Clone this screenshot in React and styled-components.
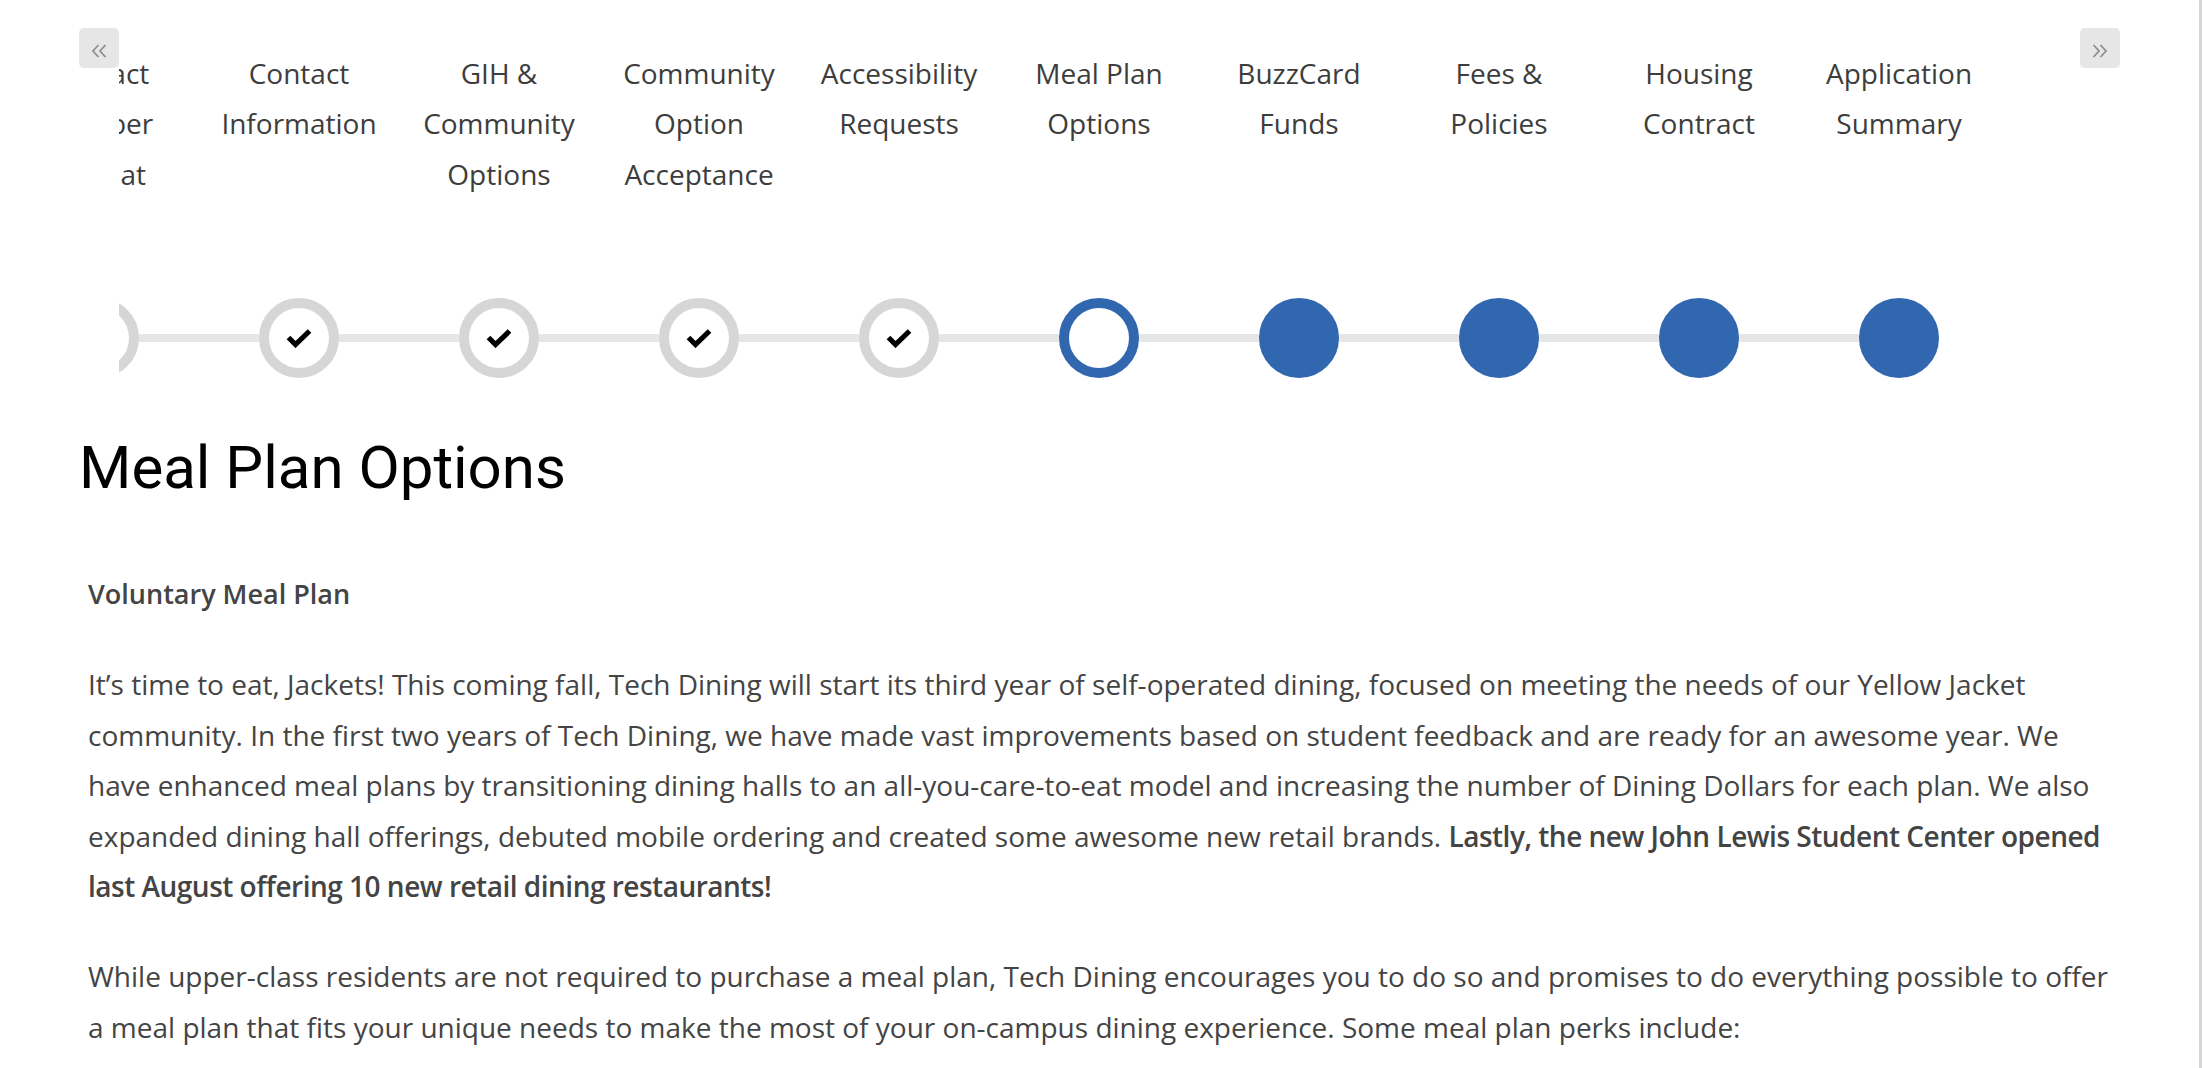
import React from "react";
import styled, { createGlobalStyle } from "styled-components";

const GlobalStyle = createGlobalStyle`
  html, body {
    margin: 0;
    padding: 0;
    background: #ffffff;
  }
  body {
    font-family: "Open Sans", "Liberation Sans", Arial, sans-serif;
    color: #444444;
  }
  * { box-sizing: border-box; }
`;

const Page = styled.div`
  min-height: 100vh;
  padding: 0 79px 40px 79px;
  border-right: 3px solid #d6d6d6;
`;

const StepperRow = styled.div`
  display: flex;
  align-items: flex-start;
  padding-top: 28px;
`;

const NavButton = styled.button`
  flex: 0 0 40px;
  width: 40px;
  height: 40px;
  border: none;
  border-radius: 5px;
  background: #e6e6e6;
  padding: 6px 0 0 0;
  margin: 0;
  display: flex;
  align-items: center;
  justify-content: center;
  cursor: pointer;
`;

const Viewport = styled.div`
  flex: 1 1 auto;
  min-width: 0;
  overflow: hidden;
`;

const Track = styled.div`
  display: flex;
  margin-left: ${(p) => -p.$offset}px;
`;

const Step = styled.div`
  flex: 0 0 200px;
  width: 200px;
  display: flex;
  flex-direction: column;
  align-items: center;
  padding-top: 20px;
`;

const StepLabel = styled.div`
  width: 170px;
  height: 250px;
  text-align: center;
  font-size: 28px;
  line-height: 50.4px;
  color: #3d3d3d;
`;

const CircleRow = styled.div`
  width: 100%;
  height: 80px;
  display: flex;
  align-items: center;
`;

const Connector = styled.div`
  flex: 1 1 0;
  height: 8px;
  background: ${(p) => (p.$hidden ? "transparent" : "#e6e6e6")};
`;

const Circle = styled.div`
  flex: 0 0 80px;
  width: 80px;
  height: 80px;
  border-radius: 50%;
  border: 10px solid ${(p) => (p.$state === "done" ? "#d6d6d6" : "#3067ae")};
  background: ${(p) => (p.$state === "todo" ? "#3067ae" : "#ffffff")};
  display: flex;
  align-items: center;
  justify-content: center;
`;

const Heading = styled.h1`
  margin: 54px 0 0 0;
  font-family: Roboto, "Liberation Sans", Arial, sans-serif;
  font-weight: 400;
  font-size: 60px;
  line-height: 72px;
  color: #000000;
`;

const Content = styled.section`
  padding: 65px 9px 0 9px;
`;

const SubHeading = styled.p`
  margin: 0 0 40px 0;
  font-size: 27px;
  line-height: 50.4px;
  font-weight: 600;
  color: #444444;
`;

const Paragraph = styled.p`
  margin: 0 0 40px 0;
  font-size: 28px;
  line-height: 50.4px;
  font-weight: 400;
  color: #444444;
`;

const Strong = styled.strong`
  font-weight: 600;
  letter-spacing: -0.5px;
`;

const ChevronsIcon = ({ dir }) => (
  <svg width="16" height="14" viewBox="0 0 16 14" aria-hidden="true">
    <path
      d={
        dir === "left"
          ? "M7.5 1 L2 7 L7.5 13 M14.5 1 L9 7 L14.5 13"
          : "M1.5 1 L7 7 L1.5 13 M8.5 1 L14 7 L8.5 13"
      }
      fill="none"
      stroke="#8e8e8e"
      strokeWidth="1.8"
    />
  </svg>
);

const CheckIcon = () => (
  <svg width="28" height="20" viewBox="0 0 28 20" aria-hidden="true">
    <path
      d="M3.5 9.5 L10.5 16.5 L24.5 3"
      fill="none"
      stroke="#000000"
      strokeWidth="5.2"
      strokeLinejoin="miter"
    />
  </svg>
);

const steps = [
  { label: "Contact Number Format", state: "done" },
  { label: "Contact Information", state: "done" },
  { label: "GIH & Community Options", state: "done" },
  { label: "Community Option Acceptance", state: "done" },
  { label: "Accessibility Requests", state: "done" },
  { label: "Meal Plan Options", state: "current" },
  { label: "BuzzCard Funds", state: "todo" },
  { label: "Fees & Policies", state: "todo" },
  { label: "Housing Contract", state: "todo" },
  { label: "Application Summary", state: "todo" },
];

export default function App() {
  return (
    <>
      <GlobalStyle />
      <Page>
        <StepperRow>
          <NavButton aria-label="Previous steps">
            <ChevronsIcon dir="left" />
          </NavButton>
          <Viewport>
            <Track $offset={120}>
              {steps.map((s, i) => (
                <Step key={s.label}>
                  <StepLabel>{s.label}</StepLabel>
                  <CircleRow>
                    <Connector $hidden={i === 0} />
                    <Circle $state={s.state}>
                      {s.state === "done" && <CheckIcon />}
                    </Circle>
                    <Connector $hidden={i === steps.length - 1} />
                  </CircleRow>
                </Step>
              ))}
            </Track>
          </Viewport>
          <NavButton aria-label="Next steps">
            <ChevronsIcon dir="right" />
          </NavButton>
        </StepperRow>

        <Heading>Meal Plan Options</Heading>

        <Content>
          <SubHeading>Voluntary Meal Plan</SubHeading>
          <Paragraph>
            It’s time to eat, Jackets! This coming fall, Tech Dining will start its
            third year of self-operated dining, focused on meeting the needs of our
            Yellow Jacket community. In the first two years of Tech Dining, we have
            made vast improvements based on student feedback and are ready for an
            awesome year. We have enhanced meal plans by transitioning dining halls
            to an all-you-care-to-eat model and increasing the number of Dining
            Dollars for each plan. We also expanded dining hall offerings, debuted
            mobile ordering and created some awesome new retail brands.{" "}
            <Strong>
              Lastly, the new John Lewis Student Center opened last August offering
              10 new retail dining restaurants!
            </Strong>
          </Paragraph>
          <Paragraph>
            While upper-class residents are not required to purchase a meal plan,
            Tech Dining encourages you to do so and promises to do everything
            possible to offer a meal plan that fits your unique needs to make the
            most of your on-campus dining experience. Some meal plan perks include:
          </Paragraph>
        </Content>
      </Page>
    </>
  );
}
